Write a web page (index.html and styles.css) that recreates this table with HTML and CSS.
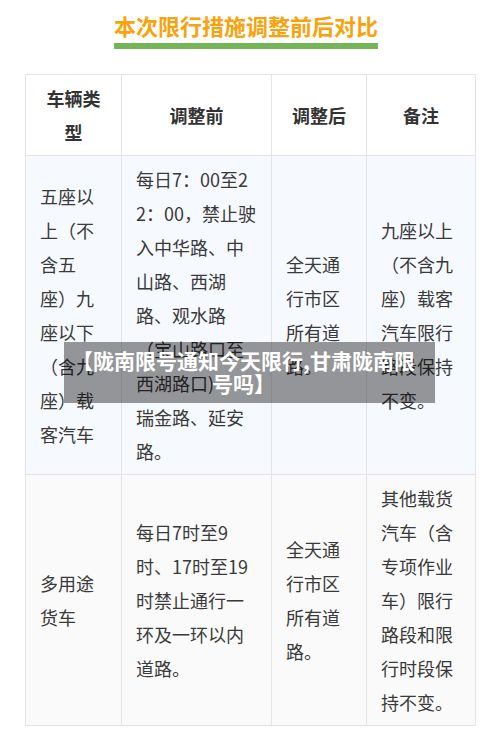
FILE: index.html
```html
<!DOCTYPE html>
<html lang="zh-CN">
<head>
<meta charset="utf-8">
<title>本次限行措施调整前后对比</title>
<link rel="stylesheet" href="styles.css">
</head>
<body>
<div class="page">
  <div class="heading">
    <h2 class="title">本次限行措施调整前后对比</h2>
  </div>
  <table class="compare">
    <colgroup>
      <col class="c1"><col class="c2"><col class="c3"><col class="c4">
    </colgroup>
    <thead>
      <tr>
        <th>车辆类型</th>
        <th>调整前</th>
        <th>调整后</th>
        <th>备注</th>
      </tr>
    </thead>
    <tbody>
      <tr class="row-a">
        <td>五座以上（不含五座）九座以下（含九座）载客汽车</td>
        <td>每日7：00至22：00，禁止驶入中华路、中山路、西湖路、观水路（宝山路口至西湖路口)<br>瑞金路、延安路。</td>
        <td>全天通行市区所有道路。</td>
        <td>九座以上（不含九座）载客汽车限行路段保持不变。</td>
      </tr>
      <tr class="row-b">
        <td>多用途货车</td>
        <td>每日7时至9时、17时至19时禁止通行一环及一环以内道路。</td>
        <td>全天通行市区所有道路。</td>
        <td>其他载货汽车（含专项作业车）限行路段和限行时段保持不变。</td>
      </tr>
    </tbody>
  </table>
  <div class="caption">【陇南限号通知今天限行,甘肃陇南限号吗】</div>
</div>
</body>
</html>
```

FILE: styles.css
```css
* { box-sizing: border-box; }

html, body {
  margin: 0;
  padding: 0;
  background: #ffffff;
}

body {
  font-family: "Noto Sans CJK SC", "Noto Sans", sans-serif;
  color: #333333;
  text-spacing-trim: space-all;
}

.page {
  position: relative;
  width: 500px;
  min-height: 746px;
}

.heading {
  text-align: center;
  padding-top: 10px;
}

.title {
  position: relative;
  display: inline-block;
  margin: 0 8px 0 0;
  padding: 0 0 3px;
  font-size: 22px;
  line-height: 30px;
  font-weight: 700;
  color: #f9a20c;
  border-bottom: 6px solid #74b556;
}

.title::before {
  content: "";
  position: absolute;
  right: -8px;
  top: -10px;
  width: 18px;
  height: 18px;
  border-radius: 50%;
  background: #ffe74f;
  z-index: -1;
}

.compare {
  border-collapse: collapse;
  table-layout: fixed;
  width: 450px;
  margin: 25px 0 0 25px;
}

.c1 { width: 96px; }
.c2 { width: 150px; }
.c3 { width: 95px; }
.c4 { width: 109px; }

.compare th,
.compare td {
  border: 1px solid #e4e4e6;
  padding: 6px 14px;
  font-size: 18px;
  line-height: 34px;
  vertical-align: middle;
  word-break: break-all;
}

.compare th {
  background: #ffffff;
  font-weight: 700;
  color: #333333;
  text-align: center;
}

.compare td {
  text-align: left;
  color: #3a3a3a;
}

.row-a td { background: #f6f9fe; }
.row-b td { background: #fafafa; }

.caption {
  position: absolute;
  left: 64px;
  top: 342px;
  width: 371px;
  height: 61px;
  padding: 7px 16px 0 4px;
  background: rgba(0, 0, 0, 0.4);
  color: #ffffff;
  font-size: 21px;
  line-height: 23px;
  font-weight: 700;
  text-align: center;
}
```
